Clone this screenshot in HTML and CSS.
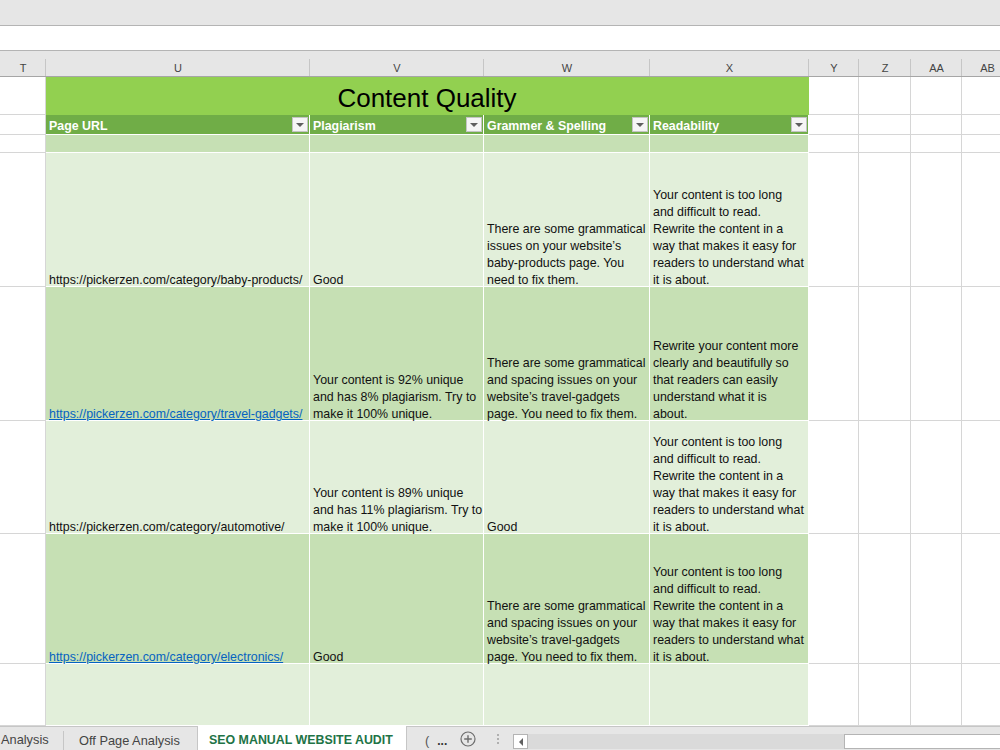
FILE: index.html
```html
<!DOCTYPE html>
<html lang="en">
<head>
    <meta charset="UTF-8">
    <title>SEO Manual Website Audit</title>
    <link rel="stylesheet" href="styles.css">
</head>
<body>
<div class="app">
    <div class="ribbon"></div>
    <div class="formula-bar"></div>

    <div class="sheet">
        <!-- column letters -->
        <div class="ch">T</div>
        <div class="ch">U</div>
        <div class="ch">V</div>
        <div class="ch">W</div>
        <div class="ch">X</div>
        <div class="ch">Y</div>
        <div class="ch">Z</div>
        <div class="ch">AA</div>
        <div class="ch">AB</div>

        <!-- title -->
        <div class="c"></div>
        <div class="title">Content Quality</div>
        <div class="c"></div><div class="c"></div><div class="c"></div><div class="c"></div>

        <!-- table header -->
        <div class="c"></div>
        <div class="th"><span>Page URL</span><span class="filter"></span></div>
        <div class="th"><span>Plagiarism</span><span class="filter"></span></div>
        <div class="th"><span>Grammer &amp; Spelling</span><span class="filter"></span></div>
        <div class="th"><span>Readability</span><span class="filter"></span></div>
        <div class="c"></div><div class="c"></div><div class="c"></div><div class="c"></div>

        <!-- empty row -->
        <div class="c"></div>
        <div class="t dk"></div><div class="t dk"></div><div class="t dk"></div><div class="t dk"></div>
        <div class="c"></div><div class="c"></div><div class="c"></div><div class="c"></div>

        <!-- baby products -->
        <div class="c"></div>
        <div class="t lt"><span>https://pickerzen.com/category/baby-products/</span></div>
        <div class="t lt"><span>Good</span></div>
        <div class="t lt"><span>There are some grammatical<br>issues on your website’s<br>baby-products page. You<br>need to fix them.</span></div>
        <div class="t lt"><span>Your content is too long<br>and difficult to read.<br>Rewrite the content in a<br>way that makes it easy for<br>readers to understand what<br>it is about.</span></div>
        <div class="c"></div><div class="c"></div><div class="c"></div><div class="c"></div>

        <!-- travel gadgets -->
        <div class="c"></div>
        <div class="t dk"><span><a href="#">https://pickerzen.com/category/travel-gadgets/</a></span></div>
        <div class="t dk"><span>Your content is 92% unique<br>and has 8% plagiarism. Try to<br>make it 100% unique.</span></div>
        <div class="t dk"><span>There are some grammatical<br>and spacing issues on your<br>website’s travel-gadgets<br>page. You need to fix them.</span></div>
        <div class="t dk"><span>Rewrite your content more<br>clearly and beautifully so<br>that readers can easily<br>understand what it is<br>about.</span></div>
        <div class="c"></div><div class="c"></div><div class="c"></div><div class="c"></div>

        <!-- automotive -->
        <div class="c"></div>
        <div class="t lt"><span>https://pickerzen.com/category/automotive/</span></div>
        <div class="t lt"><span>Your content is 89% unique<br>and has 11% plagiarism. Try to<br>make it 100% unique.</span></div>
        <div class="t lt"><span>Good</span></div>
        <div class="t lt"><span>Your content is too long<br>and difficult to read.<br>Rewrite the content in a<br>way that makes it easy for<br>readers to understand what<br>it is about.</span></div>
        <div class="c"></div><div class="c"></div><div class="c"></div><div class="c"></div>

        <!-- electronics -->
        <div class="c"></div>
        <div class="t dk"><span><a href="#">https://pickerzen.com/category/electronics/</a></span></div>
        <div class="t dk"><span>Good</span></div>
        <div class="t dk"><span>There are some grammatical<br>and spacing issues on your<br>website’s travel-gadgets<br>page. You need to fix them.</span></div>
        <div class="t dk"><span>Your content is too long<br>and difficult to read.<br>Rewrite the content in a<br>way that makes it easy for<br>readers to understand what<br>it is about.</span></div>
        <div class="c"></div><div class="c"></div><div class="c"></div><div class="c"></div>

        <!-- next row -->
        <div class="c"></div>
        <div class="t lt"></div><div class="t lt"></div><div class="t lt"></div><div class="t lt"></div>
        <div class="c"></div><div class="c"></div><div class="c"></div><div class="c"></div>
    </div>

    <div class="tabs">
        <div class="tab tab-first">Analysis</div>
        <div class="tab tab-off">Off Page Analysis</div>
        <div class="tab tab-active">SEO MANUAL WEBSITE AUDIT</div>
        <div class="tab tab-more"><span class="paren">(</span><b>...</b></div>
        <div class="tab tab-add">
            <svg width="16" height="16" viewBox="0 0 16 16">
                <circle cx="8" cy="8" r="7" fill="none" stroke="#6d6d6d" stroke-width="1.2"/>
                <path d="M8 4.2v7.6M4.2 8h7.6" stroke="#6d6d6d" stroke-width="1.4"/>
            </svg>
        </div>
        <div class="tab tab-dots"><i></i><i></i><i></i></div>
        <div class="hscroll">
            <div class="scroll-btn"><span class="arrow-left"></span></div>
            <div class="scroll-track"></div>
            <div class="scroll-thumb"></div>
        </div>
    </div>
</div>
</body>
</html>
```

FILE: styles.css
```css
body {
    margin: 0;
    font-family: "Liberation Sans", Arial, sans-serif;
    background: #fff;
    overflow: hidden;
}
.app {
    width: 1000px;
    height: 750px;
    display: flex;
    flex-direction: column;
    overflow: hidden;
}
.ribbon {
    height: 25px;
    flex: none;
    background: #e6e6e6;
    border-bottom: 1px solid #b4b4b4;
}
.formula-bar {
    height: 24px;
    flex: none;
    background: #fff;
    border-bottom: 1px solid #b4b4b4;
}

/* grid of cells */
.sheet {
    flex: none;
    height: 675px;
    display: grid;
    grid-template-columns: 46px 264px 174px 166px 159px 50px 52px 51px 51px;
    grid-template-rows: 26px 38px 20px 18px 134px 134px 113px 130px 62px;
    overflow: hidden;
}
.sheet > div {
    box-sizing: border-box;
    min-width: 0;
    border-right: 1px solid #d6d6d6;
    border-bottom: 1px solid #d6d6d6;
}
.ch {
    display: flex;
    align-items: flex-end;
    justify-content: center;
    padding-bottom: 2px;
    font-size: 11px;
    color: #444;
    background: linear-gradient(#c6c6c6, #c6c6c6) right bottom / 1px 17px no-repeat, #e6e6e6;
    border-right: 0 !important;
    border-bottom-color: #a6a6a6 !important;
}
.sheet > .title {
    grid-column: span 4;
    display: flex;
    align-items: flex-end;
    justify-content: center;
    padding-bottom: 0;
    background: #92d050;
    color: #000;
    font-size: 26px;
    line-height: 33px;
    border-bottom: 0;
    border-right-color: #92d050;
}
.sheet > .th {
    display: flex;
    align-items: center;
    justify-content: space-between;
    padding: 0 1px 0 3px;
    background: #70ad47;
    color: #fff;
    font-size: 12.4px;
    font-weight: bold;
    border-color: #fff;
}
.th span:first-child {
    padding-top: 3px;
}
.filter {
    width: 16px;
    height: 15px;
    box-sizing: border-box;
    border: 1px solid #c4c4c4;
    background: #f5f5f5;
    display: flex;
    align-items: center;
    justify-content: center;
}
.filter::before {
    content: "";
    border-left: 4px solid transparent;
    border-right: 4px solid transparent;
    border-top: 4px solid #5f5f5f;
}
.sheet > .t {
    display: flex;
    align-items: flex-end;
    padding: 0 2px 0 3px;
    font-size: 12.4px;
    line-height: 17px;
    color: #111;
    white-space: nowrap;
    border-color: #fff;
}
.t > span {
    margin-bottom: -3px;
}
.t a {
    color: #0563c1;
    text-decoration: underline;
}
.lt {
    background: #e2efda;
}
.dk {
    background: #c6e0b4;
}

/* sheet tabs */
.tabs {
    flex: none;
    height: 24px;
    display: flex;
    background: #e6e6e6;
    border-top: 1px solid #c6c6c6;
    font-size: 12.8px;
    color: #444;
}
.tab {
    box-sizing: border-box;
    display: flex;
    align-items: center;
    flex: none;
    padding-top: 3px;
}
.tab-first {
    width: 64px;
    padding: 0 0 4px 1px;
    border-right: 1px solid #c6c6c6;
    margin-top: 4px;
}
.tab-off {
    width: 133px;
    padding-left: 15px;
}
.tab-active {
    width: 210px;
    padding-left: 11px;
    margin-top: -1px;
    background: #fff;
    color: #217346;
    font-weight: bold;
    font-size: 12.4px;
    border-left: 1px solid #c6c6c6;
    border-right: 1px solid #c6c6c6;
}
.tab-more {
    width: 52px;
    padding-left: 18px;
    color: #555;
}
.tab-more .paren {
    margin-right: 8px;
}
.tab-more b {
    color: #333;
    font-size: 12px;
}
.tab-add {
    width: 18px;
    justify-content: center;
    padding-top: 0;
}
.tab-dots {
    width: 36px;
    flex-direction: column;
    justify-content: center;
    align-items: flex-start;
    padding: 0 0 0 20px;
    gap: 2px;
}
.tab-dots i {
    display: block;
    width: 2px;
    height: 2px;
    background: #b0b0b0;
}
.hscroll {
    flex: 1;
    display: flex;
    padding-top: 7px;
    height: 15px;
}
.scroll-btn {
    width: 15px;
    height: 15px;
    box-sizing: border-box;
    background: #fff;
    border: 1px solid #b4b4b4;
    display: flex;
    align-items: center;
    justify-content: center;
}
.arrow-left {
    border-top: 4px solid transparent;
    border-bottom: 4px solid transparent;
    border-right: 4px solid #606060;
}
.scroll-track {
    width: 316px;
    height: 15px;
    background: #dadada;
}
.scroll-thumb {
    flex: 1;
    height: 15px;
    box-sizing: border-box;
    background: #fff;
    border: 1px solid #b4b4b4;
    border-right: 0;
}
```
